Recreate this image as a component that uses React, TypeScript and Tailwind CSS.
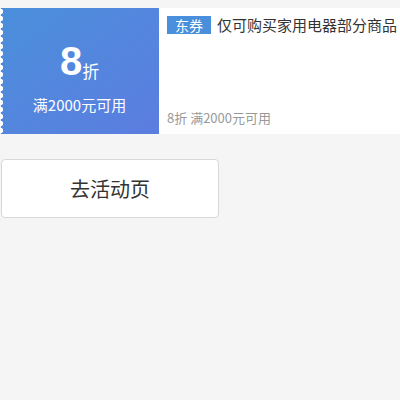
export default function App() {
  return (
    <div className="w-[400px] h-[400px] bg-[#f5f5f5] pt-2" style={{ fontFamily: '"Noto Sans CJK SC", "Noto Sans", sans-serif' }}>
      <div className="flex h-[126px] bg-white">
        <div className="relative w-[159px] shrink-0 bg-gradient-to-br from-[#4a8fdb] to-[#5b7de0] flex flex-col items-center justify-center pt-[10px] text-white">
          <div className="absolute left-0 top-0 bottom-0 w-[5px] bg-[radial-gradient(circle_at_0_50%,#ffffff_0,#ffffff_3px,transparent_3.3px)] bg-[length:5px_7px]" />
          <div className="flex items-end leading-none">
            <span className="text-[40px] font-bold leading-none" style={{ fontFamily: '"Liberation Sans", Arial, sans-serif' }}>8</span>
            <span className="text-[17px] mb-[2px]">折</span>
          </div>
          <div className="text-[15px] mt-[16px] leading-none">满2000元可用</div>
        </div>
        <div className="flex-1 min-w-0 flex flex-col justify-between pl-2 pt-[7px] pb-[10px]">
          <div className="flex items-center whitespace-nowrap">
            <span className="bg-[#4a8fdb] text-white text-[14px] leading-[18px] h-[18px] px-[8px] mr-[6px]">东券</span>
            <span className="text-[15px] text-[#333] leading-[20px]">仅可购买家用电器部分商品</span>
          </div>
          <div className="text-[13px] text-[#999] leading-none">8折 满2000元可用</div>
        </div>
      </div>
      <div className="mt-[25px] ml-[1px] w-[218px] h-[59px] bg-white border border-[#d8d8d8] rounded-[4px] flex items-center justify-center text-[20px] text-[#333]">
        去活动页
      </div>
    </div>
  );
}
